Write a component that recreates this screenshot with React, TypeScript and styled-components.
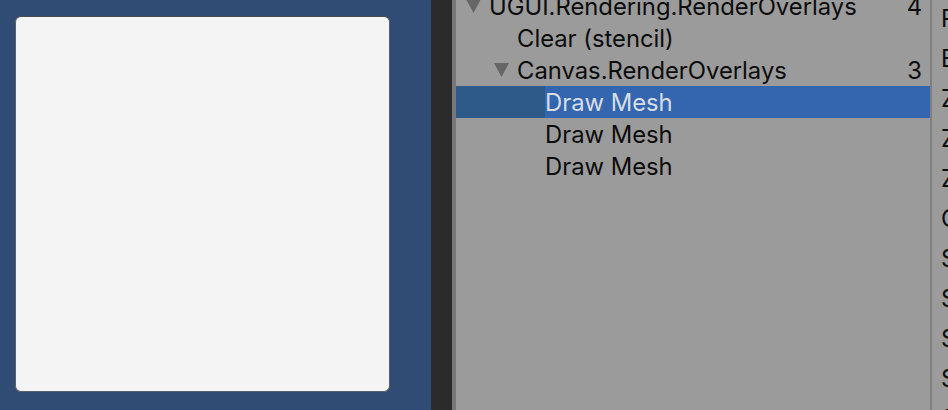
import * as React from "react";
import styled, { createGlobalStyle } from "styled-components";

const GlobalStyle = createGlobalStyle`
  html, body {
    margin: 0;
    padding: 0;
    overflow: hidden;
  }
  body {
    font-family: Inter, "Noto Sans", sans-serif;
  }
`;

type Node = { label: string; level: number; count?: number; open?: boolean; selected?: boolean };

const nodes: Node[] = [
  { label: "UGUI.Rendering.RenderOverlays", level: 0, count: 4, open: true },
  { label: "Clear (stencil)", level: 1 },
  { label: "Canvas.RenderOverlays", level: 1, count: 3, open: true },
  { label: "Draw Mesh", level: 2, selected: true },
  { label: "Draw Mesh", level: 2 },
  { label: "Draw Mesh", level: 2 },
];

const props = [
  "Pass",
  "Blend",
  "ZClip",
  "ZTest",
  "ZWrite",
  "Cull",
  "Stencil Ref",
  "Stencil Read Mask",
  "Stencil Write Mask",
  "Stencil Comp",
  "Stencil Pass",
];

export default function App() {
  return (
    <>
      <GlobalStyle />
      <Window>
        <GamePanel>
          <Card />
        </GamePanel>
        <Splitter />
        <TreePanel>
          <TreeList>
            {nodes.map((n, i) => (
              <Row key={i} selected={n.selected} style={{ paddingLeft: 5 + n.level * 28 }}>
                <Arrow>
                  {n.open && (
                    <svg width="15" height="14" viewBox="0 0 15 14">
                      <polygon points="0,0 15,0 7.5,14" fill="#666666" />
                    </svg>
                  )}
                </Arrow>
                <Label selected={n.selected}>
                  <span>{n.label}</span>
                  {n.count !== undefined && <Count>{n.count}</Count>}
                </Label>
              </Row>
            ))}
          </TreeList>
        </TreePanel>
        <Divider />
        <PropColumn>
          {props.map((p, i) => (
            <PropRow key={i}>{p}</PropRow>
          ))}
        </PropColumn>
      </Window>
    </>
  );
}

const Window = styled.div`
  display: flex;
  width: 948px;
  height: 410px;
  overflow: hidden;
  background: #9b9b9b;
`;

const GamePanel = styled.div`
  width: 431px;
  flex-shrink: 0;
  background: #304c74;
  padding: 16px 0 0 15px;
  box-sizing: border-box;
`;

const Card = styled.div`
  width: 375px;
  height: 376px;
  box-sizing: border-box;
  background: #f4f4f4;
  border-radius: 6px;
  border: 1px solid #5a5f66;
  border-top-color: #4a4a4a;
`;

const Splitter = styled.div`
  width: 21px;
  flex-shrink: 0;
  background: #2b2b2b;
  border-right: 4px solid #797979;
`;

const TreePanel = styled.div`
  flex: 1;
  min-width: 0;
  overflow: hidden;
`;

const TreeList = styled.div`
  margin-top: -10px;
`;

const Row = styled.div<{ selected?: boolean }>`
  display: flex;
  align-items: center;
  height: 32px;
  font-size: 23.8px;
  color: #0c0c0c;
  background: ${(p) => (p.selected ? "#2e5a8a" : "transparent")};
`;

const Arrow = styled.div`
  width: 28px;
  flex-shrink: 0;
  display: flex;
  align-items: center;
  padding-left: 5px;
  box-sizing: border-box;
  svg {
    display: block;
  }
`;

const Label = styled.div<{ selected?: boolean }>`
  flex: 1;
  display: flex;
  align-items: center;
  justify-content: space-between;
  height: 100%;
  white-space: nowrap;
  padding-right: 8px;
  background: ${(p) => (p.selected ? "#3466b0" : "transparent")};
  color: ${(p) => (p.selected ? "#d8dde6" : "#0c0c0c")};
`;

const Count = styled.span`
  text-align: right;
`;

const Divider = styled.div`
  width: 2px;
  flex-shrink: 0;
  background: #7f7f7f;
`;

const PropColumn = styled.div`
  width: 16px;
  box-sizing: border-box;
  flex-shrink: 0;
  overflow: hidden;
  padding-left: 9px;
  margin-top: -2px;
`;

const PropRow = styled.div`
  height: 40px;
  display: flex;
  align-items: center;
  font-size: 23.8px;
  color: #0c0c0c;
  white-space: nowrap;
  overflow: hidden;
`;
